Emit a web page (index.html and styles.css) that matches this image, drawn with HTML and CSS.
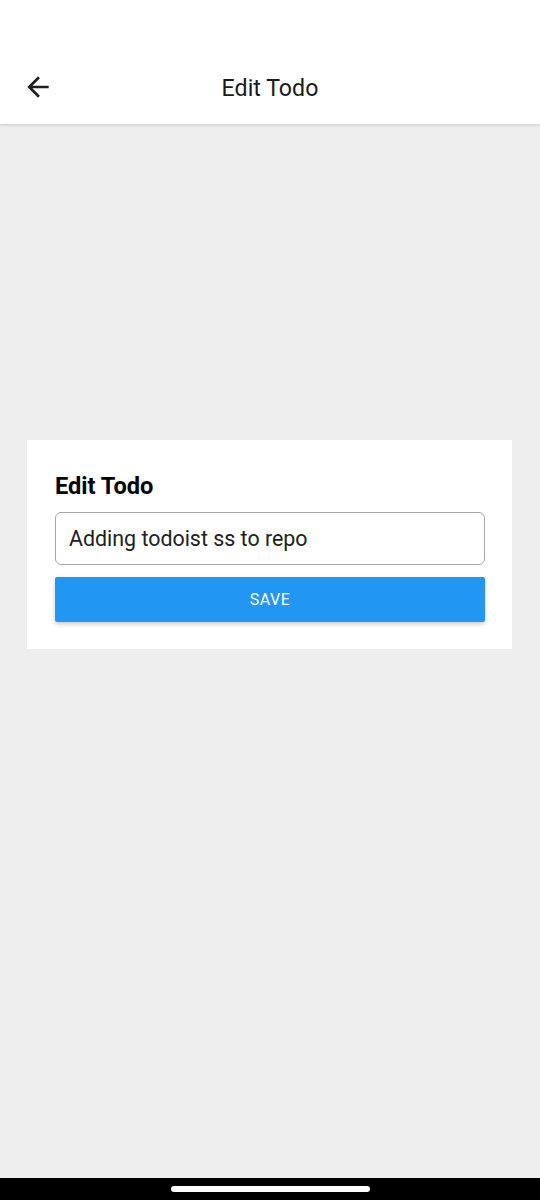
FILE: index.html
```html
<!DOCTYPE html>
<html lang="en">
<head>
<meta charset="utf-8">
<title>Edit Todo</title>
<link rel="stylesheet" href="styles.css">
</head>
<body>
<div class="screen">
  <header class="header">
    <div class="bar">
      <div class="bar-left">
        <svg class="back" viewBox="0 0 24 24" width="32" height="32" aria-hidden="true">
          <path d="M20 11H7.83l5.59-5.59L12 4l-8 8 8 8 1.41-1.41L7.83 13H20v-2z" fill="#1f1f1f"/>
        </svg>
      </div>
      <div class="title">Edit Todo</div>
      <div class="bar-right"></div>
    </div>
  </header>
  <main class="main">
    <section class="card">
      <h2 class="card-title">Edit Todo</h2>
      <div class="input">Adding todoist ss to repo</div>
      <div class="btn">SAVE</div>
    </section>
  </main>
  <footer class="navbar">
    <div class="home-indicator"></div>
  </footer>
</div>
</body>
</html>
```
FILE: styles.css
```css
* { box-sizing: border-box; }
html, body { margin: 0; padding: 0; }
body {
  font-family: Roboto, "Noto Sans", "Liberation Sans", sans-serif;
  background: #eeeeee;
  color: #1f1f1f;
}
.screen {
  width: 540px;
  height: 1200px;
  display: flex;
  flex-direction: column;
  overflow: hidden;
}
.header {
  height: 124px;
  flex: 0 0 124px;
  background: #ffffff;
  box-shadow: 0 1px 3px rgba(0, 0, 0, 0.16);
  padding-top: 62px;
  position: relative;
  z-index: 1;
}
.bar {
  height: 48px;
  display: grid;
  grid-template-columns: 1fr auto 1fr;
  align-items: center;
}
.bar-left {
  display: flex;
  align-items: center;
  padding-left: 22px;
}
.back { display: block; }
.title {
  font-size: 23.2px;
  line-height: 48px;
  margin-top: 2px;
  color: #1a1a1a;
}
.main {
  flex: 1;
  padding: 316px 28px 0 27px;
}
.card {
  background: #ffffff;
  padding: 32px 27px 27px 28px;
}
.card-title {
  margin: 0 0 12px 0;
  font-size: 23.6px;
  line-height: 28px;
  font-weight: 700;
  color: #000000;
}
.input {
  height: 53px;
  border: 1px solid #a8a8a8;
  border-radius: 6px;
  padding: 0 13px;
  display: flex;
  align-items: center;
  font-size: 21.4px;
  color: #212121;
}
.btn {
  margin-top: 12px;
  height: 45px;
  background: #2196f3;
  border-radius: 2px;
  box-shadow: 0 2px 4px rgba(0, 0, 0, 0.22);
  color: #ffffff;
  font-size: 16px;
  letter-spacing: 0.5px;
  display: flex;
  align-items: center;
  justify-content: center;
}
.navbar {
  flex: 0 0 22px;
  background: #000000;
  padding-top: 8px;
  display: flex;
  justify-content: center;
}
.home-indicator {
  width: 199px;
  height: 6px;
  border-radius: 3px;
  background: #ffffff;
}
```
